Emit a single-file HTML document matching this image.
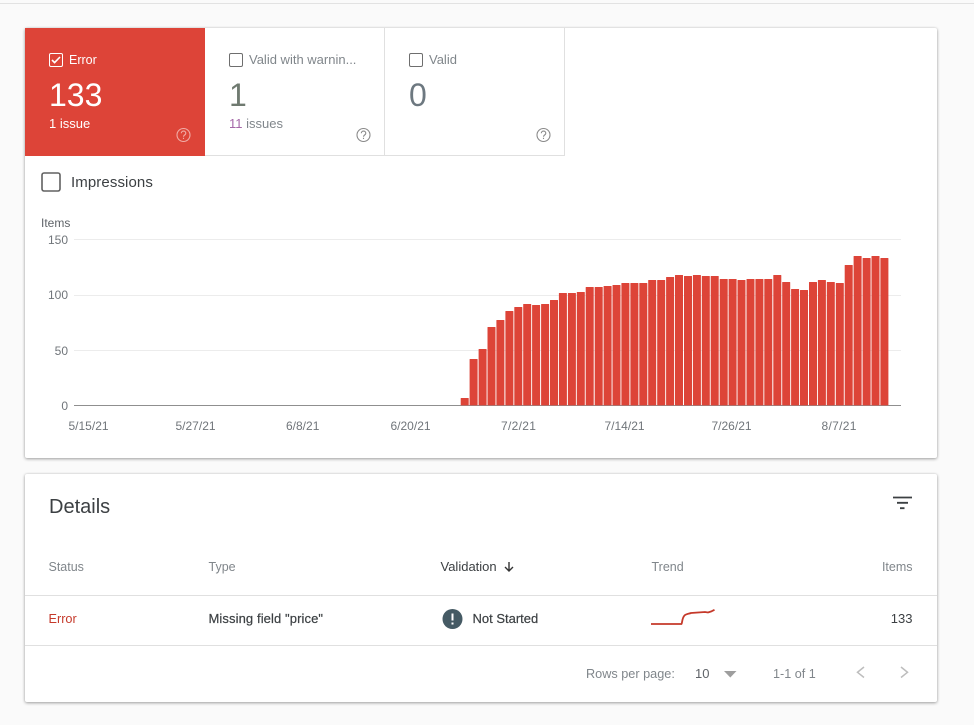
<!DOCTYPE html>
<html><head><meta charset="utf-8"><style>
html,body{margin:0;padding:0;width:974px;height:725px;overflow:hidden;background:#fafafa;font-family:"Liberation Sans",sans-serif}
div{position:absolute}
.t{white-space:nowrap;line-height:16px;font-size:12px}
.m{font-size:13px}
.h{font-size:12.5px}
.g{color:#80868b}.d{color:#3c4043}.x{color:#70757a}
.b{-webkit-text-stroke:.2px #3c4043}
.n{font-size:32px;line-height:34px;top:78px}
.card{left:25px;width:912px;background:#fff;border-radius:2px;box-shadow:0 1px 3px rgba(0,0,0,.35),0 0 2px rgba(0,0,0,.1)}
.tab{top:28px;width:179px;height:127px;border-right:1px solid #e0e0e0;border-bottom:1px solid #e0e0e0}
svg{position:absolute;left:0;top:0}
</style></head><body>
<div style="left:0;top:3px;width:974px;height:1px;background:#e2e2e2"></div>
<div class="card" style="top:28px;height:430px"></div>
<div class="card" style="top:474px;height:228px"></div>
<div style="left:25px;top:28px;width:180px;height:128px;background:#dd4438"></div>
<div class="tab" style="left:205px"></div>
<div class="tab" style="left:385px"></div>

<svg width="974" height="725" viewBox="0 0 974 725" fill="none">
<rect x="49.5" y="53.5" width="13" height="13" rx="1.5" stroke="#fff"/>
<path d="M52 60l2.6 2.6L60 57" stroke="#fff" stroke-width="1.6"/>
<path d="M229.5 55v10q0 1.500 1.500 1.500h10q1.500 0 1.500-1.500V55q0-1.500-1.500-1.500H231q-1.500 0-1.500 1.500zM409.500 55v10q0 1.500 1.500 1.500h10q1.500 0 1.500-1.500V55q0-1.500-1.500-1.500H411q-1.500 0-1.500 1.500z" stroke="#6e6e6e"/>
<rect x="42" y="173" width="18" height="18" rx="2" stroke="#616161" stroke-width="1.6"/>
<circle cx="183.5" cy="135" r="6.5" stroke="#f0aca6" stroke-width="1.1"/>
<path d="M181.3 133.300c0-3 4.500-3 4.500 0 0 1.700-2.300 1.700-2.300 3.400M183.500 137.800v1.200" stroke="#f0aca6" stroke-width="1.1"/>
<path d="M370 135a6.500 6.500 0 1 1-13 0a6.500 6.500 0 1 1 13 0zM361.300 133.300c0-3 4.500-3 4.500 0 0 1.700-2.300 1.700-2.300 3.400M363.500 137.800v1.200M550 135a6.500 6.500 0 1 1-13 0a6.500 6.500 0 1 1 13 0zM541.300 133.300c0-3 4.500-3 4.500 0 0 1.700-2.300 1.700-2.300 3.400M543.500 137.800v1.200" stroke="#8a8a8a" stroke-width="1.1"/>
<path d="M74 239.500H901M74 295.500H901M74 350.500H901" stroke="#ececec"/>
<path d="M74 405.500H901" stroke="#8f8f8f"/>
<path fill="#dd4438" stroke="#dd4438" stroke-width=".8" stroke-linejoin="round" d="M461.100 398.400h7.200V405h-7.200zM470 359.400h7.200V405H470zM479 349.400h7.200V405H479zM487.900 327.400h7.200V405h-7.200zM496.800 320.400h7.200V405h-7.200zM505.800 311.400h7.200V405h-7.200zM514.700 307.400h7.200V405h-7.200zM523.600 304.400h7.200V405h-7.200zM532.500 305.400h7.200V405h-7.200zM541.500 304.400h7.200V405h-7.200zM550.400 300.400h7.200V405h-7.200zM559.300 293.400h7.200V405h-7.200zM568.300 293.400h7.200V405h-7.200zM577.200 292.400h7.200V405h-7.200zM586.100 287.400h7.200V405h-7.200zM595.100 287.400h7.200V405h-7.200zM604 286.400h7.200V405H604zM612.900 285.400h7.200V405h-7.200zM621.800 283.400h7.200V405h-7.200zM630.800 283.400h7.200V405h-7.200zM639.700 283.400h7.200V405h-7.200zM648.600 280.400h7.200V405h-7.200zM657.600 280.400h7.200V405h-7.200zM666.500 277.400h7.200V405h-7.200zM675.400 275.400h7.200V405h-7.200zM684.400 276.400h7.200V405h-7.200zM693.300 275.400h7.200V405h-7.200zM702.200 276.400h7.200V405h-7.200zM711.100 276.400h7.200V405h-7.200zM720.100 279.400h7.200V405h-7.200zM729 279.400h7.200V405H729zM737.900 280.400h7.200V405h-7.200zM746.900 279.400h7.200V405h-7.200zM755.800 279.400h7.200V405h-7.200zM764.700 279.400h7.200V405h-7.200zM773.700 275.400h7.200V405h-7.200zM782.600 282.400h7.200V405h-7.200zM791.500 289.400h7.200V405h-7.200zM800.400 290.400h7.200V405h-7.200zM809.400 282.400h7.200V405h-7.200zM818.300 280.400h7.200V405h-7.200zM827.200 282.400h7.200V405h-7.200zM836.200 283.400h7.200V405h-7.200zM845.100 265.400h7.200V405h-7.200zM854 256.400h7.200V405H854zM863 258.400h7.200V405H863zM871.900 256.400h7.200V405h-7.200zM880.800 258.400h7.200V405h-7.200z"/>
<path d="M25 595.500H937M25 645.500H937" stroke="#e0e0e0"/>
<path d="M893 497.500H912M897 502.800H908M900 508.200H904.500" stroke="#3c4043" stroke-width="1.8"/>
<path d="M509 562V571M505 567L509 571L513 567" stroke="#333" stroke-width="1.4"/>
<circle cx="452.500" cy="619" r="10" fill="#455a64"/>
<path d="M452.500 613.500V620.500M452.500 622.500V624.500" stroke="#fff" stroke-width="2"/>
<path d="M651 624H681.500C682.300 623 682 618 684.500 615.500C686 614 689 613.800 691 613L705 612L708 612.500L711 611.500L714.500 609.800" stroke="#c5392a" stroke-width="1.8"/>
<path d="M724 671H736.500L730.300 677.500Z" fill="#9e9e9e"/>
<path d="M864 667L857.500 672.300L864 677.500M901 667L907.500 672.300L901 677.500" stroke="#bdbdbd" stroke-width="1.500"/>
</svg>

<div class="t h" style="left:69px;top:52px;color:#fff">Error</div>
<div class="t m g" style="left:249px;top:52px">Valid with warnin...</div>
<div class="t m g" style="left:429px;top:52px">Valid</div>
<div class="t n" style="left:49px;color:#fff">133</div>
<div class="t n" style="left:229px;color:#6f7a70">1</div>
<div class="t n" style="left:409px;color:#6d7880">0</div>
<div class="t m" style="left:49px;top:116px;color:#fff">1 issue</div>
<div class="t m g" style="left:229px;top:116px"><span style="color:#a568a8">11</span> issues</div>
<div class="t d" style="left:71px;top:175px;font-size:15px;letter-spacing:.1px">Impressions</div>
<div class="t" style="left:41px;top:215px;color:#5f6368">Items</div>
<div class="t x" style="right:906px;top:232px">150</div>
<div class="t x" style="right:906px;top:287px">100</div>
<div class="t x" style="right:906px;top:343px">50</div>
<div class="t x" style="right:906px;top:398px">0</div>
<div class="t x" style="left:68.500px;top:418px">5/15/21</div>
<div class="t x" style="left:175.500px;top:418px">5/27/21</div>
<div class="t x" style="left:286px;top:418px">6/8/21</div>
<div class="t x" style="left:390.500px;top:418px">6/20/21</div>
<div class="t x" style="left:501px;top:418px;letter-spacing:.3px">7/2/21</div>
<div class="t x" style="left:604.500px;top:418px">7/14/21</div>
<div class="t x" style="left:711.500px;top:418px">7/26/21</div>
<div class="t x" style="left:821.500px;top:418px;letter-spacing:.3px">8/7/21</div>

<div class="t d" style="left:49px;top:496px;font-size:20px;line-height:22px">Details</div>
<div class="t h g" style="left:48.500px;top:559px">Status</div>
<div class="t h g" style="left:208.500px;top:559px">Type</div>
<div class="t m d" style="left:440.500px;top:559px">Validation</div>
<div class="t h g" style="left:651.500px;top:559px">Trend</div>
<div class="t h g" style="right:61.500px;top:559px">Items</div>
<div class="t" style="left:48.500px;top:611px;color:#c5392a;font-size:12.7px">Error</div>
<div class="t m d b" style="left:208.500px;top:611px;letter-spacing:.1px">Missing field "price"</div>
<div class="t m d b" style="left:472.500px;top:611px">Not Started</div>
<div class="t m d" style="right:61.500px;top:611px">133</div>
<div class="t g" style="left:586px;top:666px;font-size:12.7px">Rows per page:</div>
<div class="t m" style="left:695px;top:666px;color:#5f6368">10</div>
<div class="t g" style="left:773px;top:666px;font-size:12.6px">1-1 of 1</div>
</body></html>
